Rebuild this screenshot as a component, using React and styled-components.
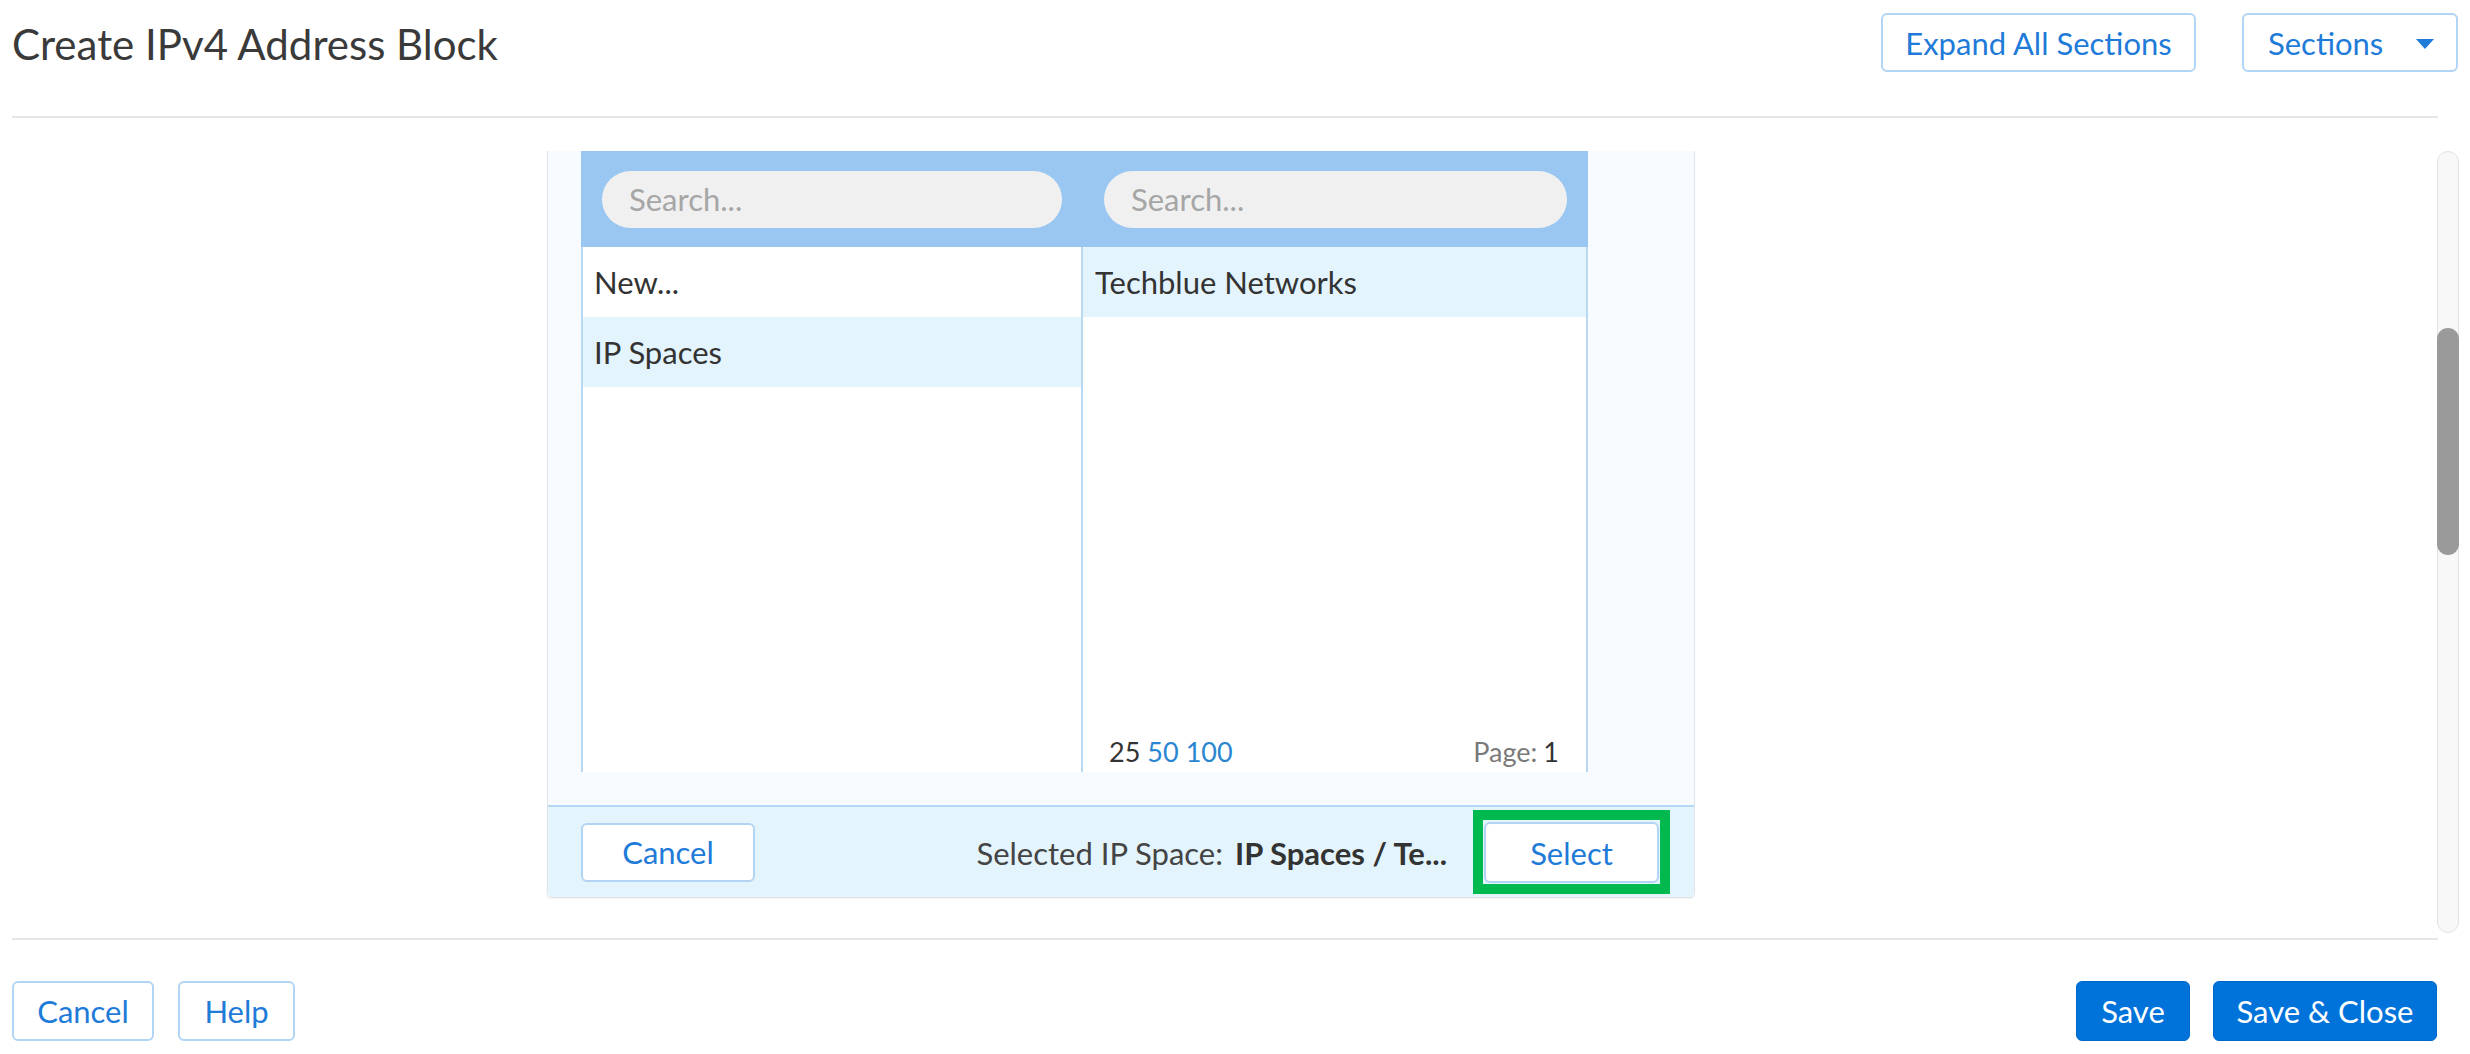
import React from "react";
import styled, { createGlobalStyle } from "styled-components";

const GlobalStyle = createGlobalStyle`
  html, body {
    margin: 0;
    padding: 0;
    background: #ffffff;
    font-family: Lato, "Open Sans", sans-serif;
    color: #333333;
  }
  * { box-sizing: border-box; }
`;

const Page = styled.div`
  width: 2470px;
  height: 1054px;
  display: flex;
  flex-direction: column;
  overflow: hidden;
`;

const Header = styled.div`
  display: flex;
  align-items: center;
  justify-content: space-between;
  height: 59px;
  margin-top: 13px;
  padding: 0 12px;
`;

const Title = styled.h1`
  margin: 0;
  font-size: 42px;
  font-weight: 400;
  color: #3a3a3a;
  padding-top: 2px;
`;

const HeaderActions = styled.div`
  display: flex;
  gap: 46px;
`;

const OutlineButton = styled.button`
  height: ${(p) => p.$h || 59}px;
  width: ${(p) => p.$w}px;
  background: #ffffff;
  border: 2px solid #b2d4f5;
  border-radius: 6px;
  color: #1f7bd8;
  font-family: Lato, sans-serif;
  font-size: 31px;
  display: flex;
  align-items: center;
  justify-content: ${(p) => (p.$caret ? "space-between" : "center")};
  padding: ${(p) => (p.$caret ? "0 22px 0 24px" : "0")};
  cursor: pointer;
`;

const Caret = styled.span`
  width: 0;
  height: 0;
  border-left: 9px solid transparent;
  border-right: 9px solid transparent;
  border-top: 10px solid #1f7bd8;
  margin-top: 2px;
`;

const Divider = styled.div`
  height: 2px;
  background: #e6e6e6;
  margin: ${(p) => p.$m};
`;

const Body = styled.div`
  display: flex;
  height: 782px;
  margin: 33px 11px 0 12px;
`;

const Content = styled.div`
  flex: 1;
  overflow: hidden;
  padding-left: 535px;
`;

const Panel = styled.div`
  width: 1148px;
  background: #f7fbff;
  border-left: 1px solid #e1e6ea;
  border-right: 1px solid #e1e6ea;
  border-bottom: 1px solid #dde2e6;
  border-radius: 0 0 5px 5px;
  box-shadow: 0 1px 2px rgba(0, 0, 0, 0.06);
  display: flex;
  flex-direction: column;
`;

const Picker = styled.div`
  width: 1007px;
  margin-left: 33px;
  display: flex;
  flex-direction: column;
`;

const SearchBar = styled.div`
  height: 96px;
  background: #99c7f2;
  display: grid;
  grid-template-columns: 502px 505px;
  align-items: center;
`;

const SearchInput = styled.input`
  margin: 0 21px;
  height: 57px;
  border: none;
  border-radius: 29px;
  background: #f0f0f0;
  padding: 0 27px;
  font-family: Lato, sans-serif;
  font-size: 31px;
  color: #333;
  outline: none;
  &::placeholder { color: #a6a6a6; }
`;

const Columns = styled.div`
  height: 525px;
  display: grid;
  grid-template-columns: 502px 505px;
`;

const Column = styled.div`
  background: #ffffff;
  border-left: ${(p) => (p.$first ? "2px solid #b9d8f2" : "none")};
  border-right: 2px solid #b9d8f2;
  display: flex;
  flex-direction: column;
`;

const Row = styled.div`
  height: 70px;
  display: flex;
  align-items: center;
  padding-left: ${(p) => p.$pad}px;
  font-size: 31px;
  color: #333333;
  background: ${(p) => (p.$active ? "#e3f4fd" : "#ffffff")};
`;

const Pager = styled.div`
  margin-top: auto;
  display: flex;
  justify-content: space-between;
  align-items: flex-end;
  padding: 0 27px 4px 26px;
  font-size: 27px;
  height: 40px;
`;

const PageSizes = styled.div`
  display: flex;
  gap: 7px;
`;

const Size = styled.span`
  color: ${(p) => (p.$link ? "#2a86d1" : "#333333")};
`;

const PageLabel = styled.span`
  color: #7a7a7a;
  & b {
    font-weight: 400;
    color: #333;
    margin-left: 6px;
  }
`;

const PanelFooter = styled.div`
  margin-top: 33px;
  height: 92px;
  background: #e3f4fd;
  border-top: 2px solid #b7d8f5;
  border-radius: 0 0 5px 5px;
  display: flex;
  align-items: center;
  padding: 0 24px 0 33px;
`;

const SelectedInfo = styled.div`
  margin-left: auto;
  margin-right: 26px;
  font-size: 31px;
  color: #444444;
  padding-top: 2px;
  & strong {
    font-weight: 700;
    color: #333333;
    margin-left: 12px;
  }
`;

const Highlight = styled.div`
  border: 10px solid #00b94f;
  padding: 2px 1px 1px 1px;
  display: flex;
`;

const Track = styled.div`
  width: 22px;
  height: 782px;
  border: 1px solid #e2e2e2;
  border-radius: 11px;
  background: #f8f8f8;
  display: flex;
  flex-direction: column;
`;

const Thumb = styled.div`
  margin-top: 176px;
  height: 227px;
  margin-left: -1px;
  margin-right: -1px;
  border-radius: 11px;
  background: #9a9a9a;
`;

const Footer = styled.div`
  flex: 1;
  display: flex;
  align-items: flex-start;
  justify-content: space-between;
  padding: 41px 33px 0 12px;
`;

const ButtonGroup = styled.div`
  display: flex;
  gap: ${(p) => p.$gap}px;
`;

const PrimaryButton = styled.button`
  height: 60px;
  width: ${(p) => p.$w}px;
  background: #0073da;
  border: 1px solid #0068c8;
  border-radius: 6px;
  color: #ffffff;
  font-family: Lato, sans-serif;
  font-size: 31px;
  cursor: pointer;
`;

export default function App() {
  return (
    <Page>
      <GlobalStyle />
      <Header>
        <Title>Create IPv4 Address Block</Title>
        <HeaderActions>
          <OutlineButton $w={315}>Expand All Sections</OutlineButton>
          <OutlineButton $w={216} $caret>
            Sections <Caret />
          </OutlineButton>
        </HeaderActions>
      </Header>
      <Divider $m="44px 32px 0 12px" />

      <Body>
        <Content>
          <Panel>
            <Picker>
              <SearchBar>
                <SearchInput placeholder="Search..." />
                <SearchInput placeholder="Search..." />
              </SearchBar>
              <Columns>
                <Column $first>
                  <Row $pad={11}>New...</Row>
                  <Row $pad={11} $active>IP Spaces</Row>
                </Column>
                <Column>
                  <Row $pad={12} $active>Techblue Networks</Row>
                  <Pager>
                    <PageSizes>
                      <Size>25</Size>
                      <Size $link>50</Size>
                      <Size $link>100</Size>
                    </PageSizes>
                    <PageLabel>
                      Page:<b>1</b>
                    </PageLabel>
                  </Pager>
                </Column>
              </Columns>
            </Picker>
            <PanelFooter>
              <OutlineButton $w={174}>Cancel</OutlineButton>
              <SelectedInfo>
                Selected IP Space:<strong>IP Spaces / Te...</strong>
              </SelectedInfo>
              <Highlight>
                <OutlineButton $w={175} $h={61}>Select</OutlineButton>
              </Highlight>
            </PanelFooter>
          </Panel>
        </Content>
        <Track>
          <Thumb />
        </Track>
      </Body>

      <Divider $m="5px 32px 0 12px" />
      <Footer>
        <ButtonGroup $gap={24}>
          <OutlineButton $w={142} $h={60}>Cancel</OutlineButton>
          <OutlineButton $w={117} $h={60}>Help</OutlineButton>
        </ButtonGroup>
        <ButtonGroup $gap={23}>
          <PrimaryButton $w={114}>Save</PrimaryButton>
          <PrimaryButton $w={224}>Save &amp; Close</PrimaryButton>
        </ButtonGroup>
      </Footer>
    </Page>
  );
}
